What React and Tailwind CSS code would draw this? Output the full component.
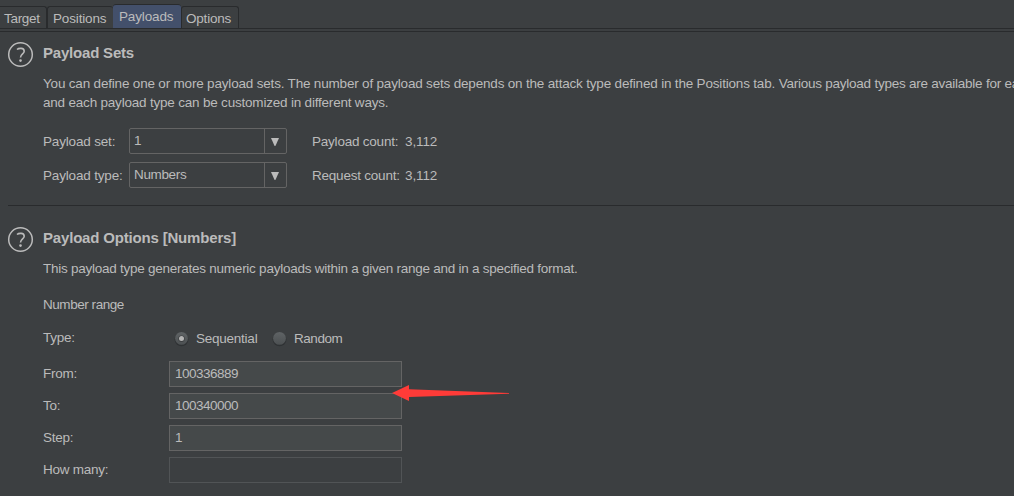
import React from "react";

function HelpIcon() {
  return (
    <svg width="27" height="27" viewBox="0 0 27 27" className="block shrink-0" fill="none" stroke="#bbbbbb">
      <circle cx="13.5" cy="13.5" r="11.8" strokeWidth="1.5" />
      <path d="M10 8.5 C11.5 7.1 17.2 6.3 17.2 10.2 C17.2 12.8 13.5 13 13.5 16.6" strokeWidth="1.6" />
      <circle cx="13.5" cy="19.6" r="1.3" fill="#bbbbbb" stroke="none" />
    </svg>
  );
}

function Section({ title, titleClass, children }) {
  return (
    <section className="flex pl-[7px]">
      <div className="w-9 shrink-0">
        <HelpIcon />
      </div>
      <div className="min-w-0 grow">
        <h2 className={`h-6 text-[15px] leading-6 font-bold ${titleClass}`}>{title}</h2>
        {children}
      </div>
    </section>
  );
}

function Combo({ label, value, countLabel, count }) {
  return (
    <div className="flex h-[26px] items-center">
      <span className="w-[86px] shrink-0 pt-px tracking-[-0.17px]">{label}</span>
      <div className="flex h-[26px] w-[158px] rounded-[2px] border border-[#646464]">
        <div className="grow pl-1 leading-[23px] tracking-[-0.35px]">{value}</div>
        <div className="flex w-[22px] items-center justify-center border-l border-[#646464] pr-0.5">
          <svg width="8" height="8" viewBox="0 0 8 8" className="mt-0.5 block">
            <path d="M0 0H8L4.4 8H3.6Z" fill="#bbbbbb" />
          </svg>
        </div>
      </div>
      <span className="ml-[25px] w-[93px] shrink-0 pt-px tracking-[-0.22px]">{countLabel}</span>
      <span className="pt-px tracking-[-0.1px]">{count}</span>
    </div>
  );
}

function Radio({ checked }) {
  return (
    <svg width="15" height="16" viewBox="0 0 15 16" className="block shrink-0">
      <defs>
        <linearGradient id="radio-face" x1="0" y1="0" x2="0" y2="1">
          <stop offset="0" stopColor="#5f6365" />
          <stop offset="1" stopColor="#4c5052" />
        </linearGradient>
      </defs>
      <circle cx="7.5" cy="8.4" r="6.9" fill="#2f3234" />
      <circle cx="7.5" cy="7.4" r="6.4" fill="url(#radio-face)" />
      {checked && (
        <>
          <circle cx="7.5" cy="7.8" r="3.2" fill="#3c3f41" />
          <circle cx="7.5" cy="7.5" r="2.5" fill="#b4b4b4" />
        </>
      )}
    </svg>
  );
}

function Field({ label, value, disabled }) {
  return (
    <div className="flex h-[26px]">
      <span className="w-[126px] shrink-0 leading-[25px]">{label}</span>
      <div
        className={
          disabled
            ? "h-[26px] w-[233px] border border-[#515456]"
            : "h-[26px] w-[233px] border border-[#646464] bg-[#45494a] pl-[5px] leading-[23px] tracking-[-0.5px]"
        }
      >
        {value}
      </div>
    </div>
  );
}

export default function App() {
  return (
    <div className="h-[496px] w-[1014px] overflow-hidden bg-[#3c3f41] font-['Liberation_Sans',Arial,sans-serif] text-[13.5px] leading-[19px] tracking-[-0.24px] whitespace-nowrap text-[#bbbbbb]">
      <header className="flex h-8 flex-col border-b border-[#292b2d]">
        <nav className="flex h-[29px] items-end border-b border-[#292b2d]">
          <div className="h-[22px] w-[47px] rounded-tr-[3px] border-t border-r border-[#292b2d] pl-1 leading-[23px] tracking-[-0.3px]">Target</div>
          <div className="h-[22px] w-[66px] rounded-t-[3px] border-t border-l border-[#292b2d] pl-[5px] leading-[23px] tracking-[-0.15px]">Positions</div>
          <div className="h-6 w-[68px] rounded-t-[3px] border-t border-[#292b2d] bg-[#43506b] pl-1.5 leading-[23px] tracking-[-0.15px]">Payloads</div>
          <div className="h-[22px] w-[58px] rounded-t-[3px] border border-b-0 border-[#292b2d] pl-1 leading-[23px] tracking-[-0.2px]">Options</div>
        </nav>
      </header>

      <main>
        <div className="pt-[9px]">
          <Section title="Payload Sets" titleClass="tracking-[-0.2px]">
            <p className="mt-[9px]">
              <span className="block tracking-[-0.185px]">
                You can define one or more payload sets. The number of payload sets depends on the attack type defined in the Positions tab.{" "}
                <span className="tracking-[-0.24px]">Various payload types are available for each</span>
              </span>
              <span className="block tracking-[-0.2px]">and each payload type can be customized in different ways.</span>
            </p>
            <div className="mt-4 flex flex-col gap-2">
              <Combo label="Payload set:" value="1" countLabel="Payload count:" count="3,112" />
              <Combo label="Payload type:" value="Numbers" countLabel="Request count:" count="3,112" />
            </div>
          </Section>
        </div>

        <hr className="mt-[17px] ml-2 border-[#292b2d]" />

        <div className="pt-5">
          <Section title="Payload Options [Numbers]" titleClass="tracking-[-0.18px]">
            <p className="mt-[9px] tracking-[-0.25px]">This payload type generates numeric payloads within a given range and in a specified format.</p>
            <h3 className="mt-[17px] tracking-[-0.45px]">Number range</h3>
            <div className="mt-[15px] flex h-[19px]">
              <span className="-mt-px w-[131px] shrink-0">Type:</span>
              <div className="flex items-center">
                <Radio checked />
                <span className="w-[83px] pl-[7px]">Sequential</span>
                <Radio />
                <span className="pl-[7px] tracking-[-0.45px]">Random</span>
              </div>
            </div>
            <div className="relative mt-[13px] flex flex-col gap-1.5">
              <Field label="From:" value="100336889" />
              <Field label="To:" value="100340000" />
              <Field label="Step:" value="1" />
              <Field label="How many:" disabled />
              <svg width="118" height="17" viewBox="0 0 118 17" className="absolute top-6 left-[349px]">
                <path d="M0 8L17 0V4.2L117 8V8.8L17 12V16Z" fill="#ff3b38" />
              </svg>
            </div>
          </Section>
        </div>
      </main>
    </div>
  );
}
